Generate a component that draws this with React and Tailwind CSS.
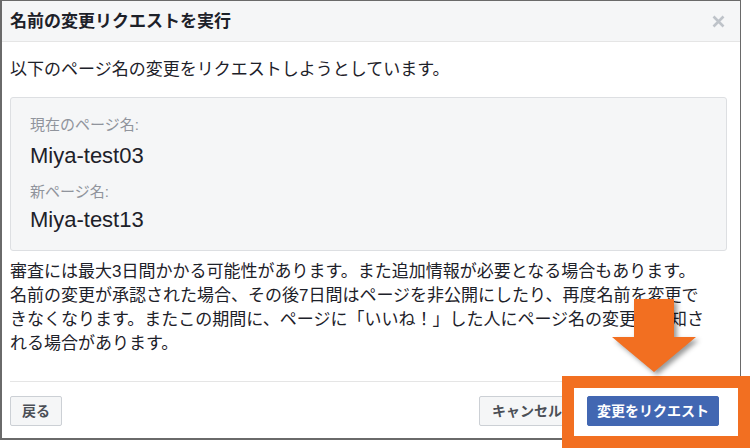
import React from 'react';

const font = { fontFamily: '"Liberation Sans", "Noto Sans CJK JP", sans-serif' };

function Arrow() {
  return (
    <svg
      className="absolute left-[600px] top-[290px] z-20"
      width="110"
      height="95"
      viewBox="0 0 110 95"
      style={{ filter: 'drop-shadow(3px 3px 2.5px rgba(0,0,0,0.4))' }}
    >
      <polygon points="34,9 74,9 74,47 96,47 54,82 12,47 34,47" fill="#f26f21" />
    </svg>
  );
}

export default function App() {
  return (
    <div className="relative h-[448px] w-[750px] overflow-hidden bg-white text-[#1d2129]" style={font}>
      <div className="flex h-[440px] w-[741px] flex-col border border-l-2 border-b-2 border-[#6a6a6a] bg-white">
        <div className="flex h-[41px] shrink-0 items-center justify-between border-b border-[#e5e5e5] bg-[#f5f6f7] pl-[8px] pr-[15px]">
          <h1 className="text-[17px] font-bold leading-none text-[#1d2129]">名前の変更リクエストを実行</h1>
          <svg width="13" height="13" viewBox="0 0 13 13">
            <path d="M1.5 1.5 L11.5 11.5 M11.5 1.5 L1.5 11.5" stroke="#bec3c9" strokeWidth="2.6" />
          </svg>
        </div>

        <div className="flex flex-col pl-[8px]">
          <p className="mt-[16px] text-[17px] leading-[24px]">以下のページ名の変更をリクエストしようとしています。</p>

          <div className="mt-[15px] h-[154px] w-[717px] rounded-[3px] border border-[#dddfe2] bg-[#f5f6f7] pl-[19px] pt-[17px]">
            <div className="text-[15px] leading-[20px] text-[#90949c]">現在のページ名:</div>
            <div className="mt-[7px] text-[22px] leading-[28px]">Miya-test03</div>
            <div className="mt-[12px] text-[15px] leading-[20px] text-[#90949c]">新ページ名:</div>
            <div className="mt-[4px] text-[22px] leading-[28px]">Miya-test13</div>
          </div>

          <p className="mt-[9px] whitespace-nowrap text-[17px] leading-[24px]">
            審査には最大3日間かかる可能性があります。また追加情報が必要となる場合もあります。
            <br />
            名前の変更が承認された場合、その後7日間はページを非公開にしたり、再度名前を変更で
            <br />
            きなくなります。またこの期間に、ページに「いいね！」した人にページ名の変更が通知さ
            <br />
            れる場合があります。
          </p>

          <div className="mt-[25px] h-px w-[717px] bg-[#e5e5e5]" />

          <div className="mt-[14px] flex w-[709px] items-center">
            <button className="h-[30px] rounded-[2px] border border-[#ccd0d5] bg-[#f5f6f7] px-[11px] text-[14px] font-bold text-[#4b4f56]">
              戻る
            </button>
            <div className="flex-1" />
            <button className="h-[30px] rounded-[2px] border border-[#ccd0d5] bg-[#f5f6f7] px-[12px] text-[14px] font-bold text-[#4b4f56]">
              キャンセル
            </button>
            <button className="relative z-30 ml-[12px] h-[30px] rounded-[2px] border border-[#4267b2] bg-[#4267b2] px-[9px] text-[14px] font-bold text-white">
              変更をリクエスト
            </button>
          </div>
        </div>
      </div>

      <div className="absolute left-[562px] top-[376px] z-10 h-[72px] w-[188px] border-[12px] border-[#f26f21] bg-white" />
      <Arrow />
    </div>
  );
}
